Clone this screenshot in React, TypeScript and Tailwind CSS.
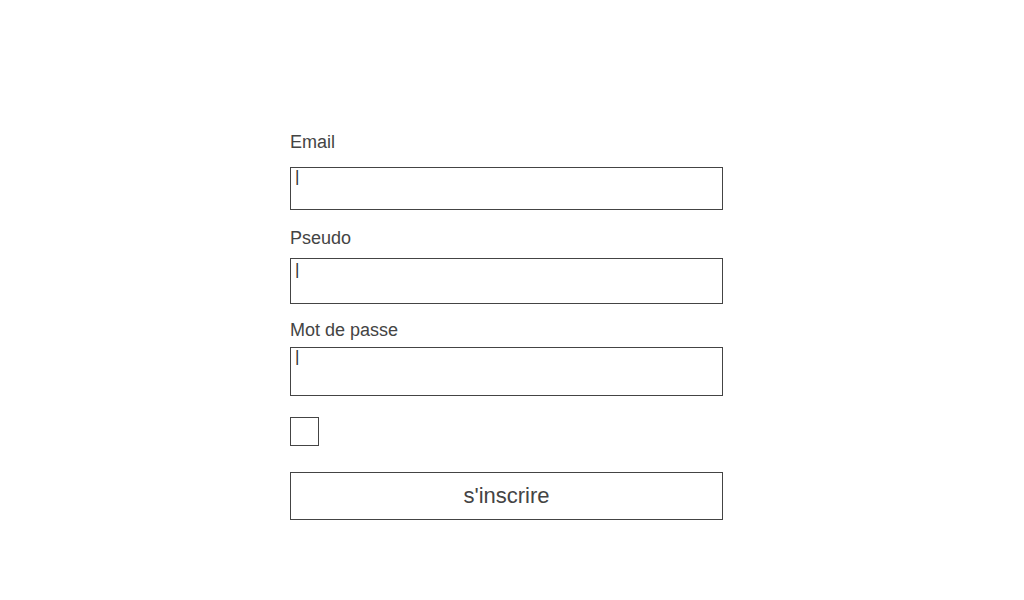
export default function App() {
  const font = { fontFamily: '"Liberation Sans", Arial, sans-serif' };

  return (
    <div className="min-h-[600px] w-full bg-white text-[#444]" style={font}>
      <form className="ml-[290px] flex w-[433px] flex-col pt-[132px]">
        <label className="h-5 text-[18px] leading-5">Email</label>
        <div className="mt-[15px] h-[43px] border border-[#444] pl-[4px] text-[17px] leading-[18px] text-[#333]">
          |
        </div>

        <label className="mt-[18px] h-5 text-[18px] leading-5">Pseudo</label>
        <div className="mt-[10px] h-[46px] border border-[#444] pl-[4px] pt-[2px] text-[17px] leading-[18px] text-[#333]">
          |
        </div>

        <label className="mt-[16px] h-5 text-[18px] leading-5">Mot de passe</label>
        <div className="mt-[7px] h-[49px] border border-[#444] pl-[4px] text-[17px] leading-[18px] text-[#333]">
          |
        </div>

        <div className="mt-[21px] h-[29px] w-[29px] border border-[#444]" />

        <button
          type="button"
          className="mt-[26px] flex h-[48px] w-full items-center justify-center border border-[#444] bg-white pb-[1px] text-[22px] text-[#444]"
        >
          s'inscrire
        </button>
      </form>
    </div>
  );
}
